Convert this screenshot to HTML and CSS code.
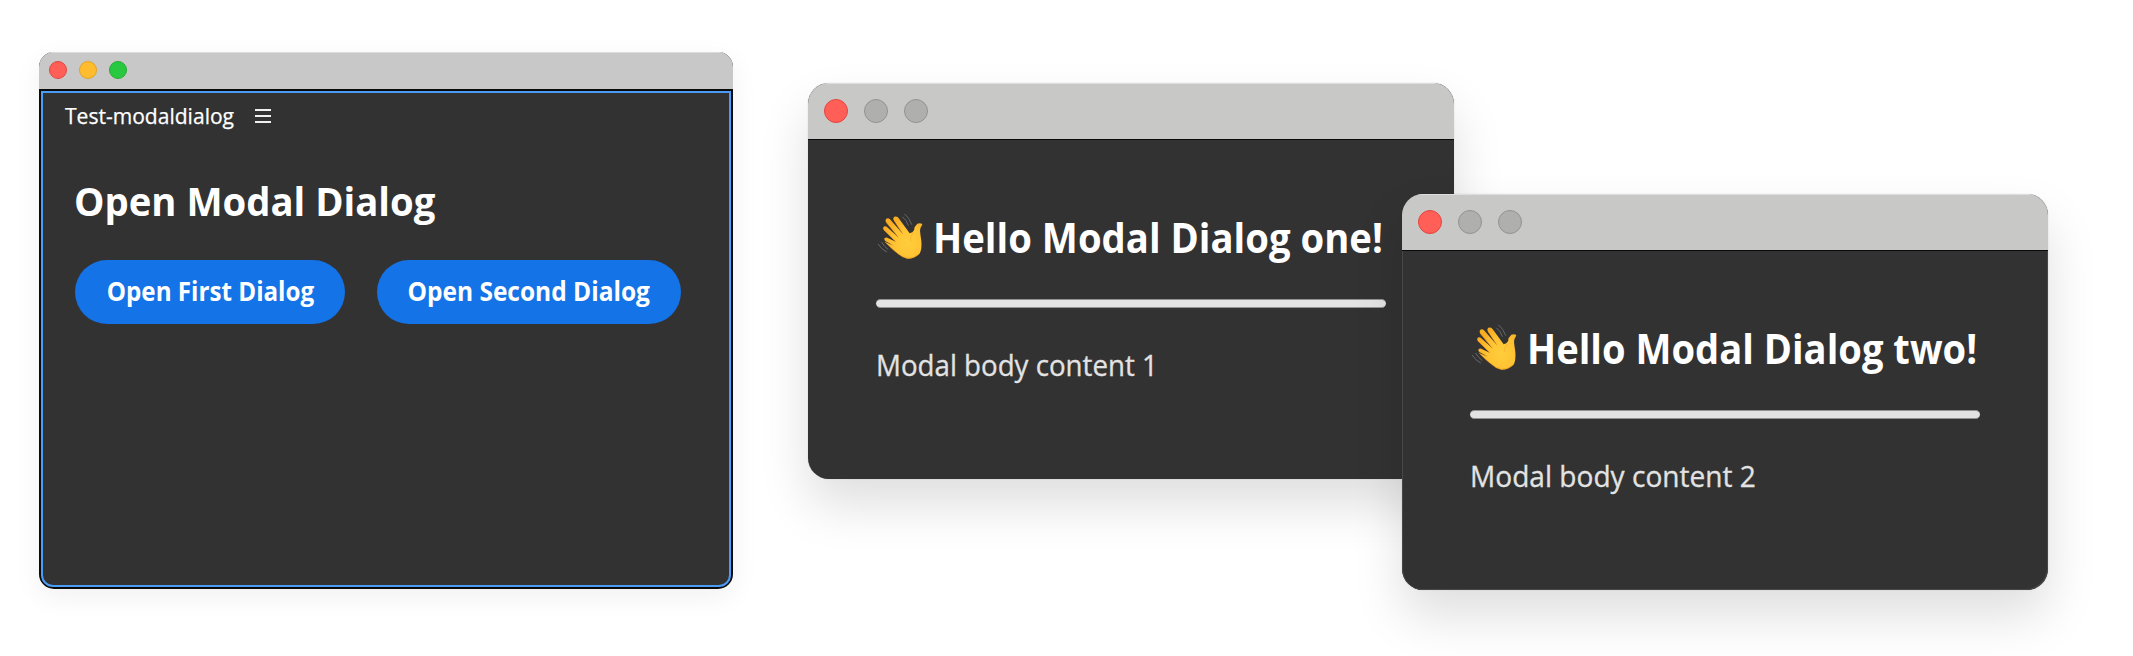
FILE: index.html
```html
<!DOCTYPE html>
<html lang="en">
<head>
<meta charset="utf-8">
<title>Modal dialogs</title>
<link rel="stylesheet" href="styles.css">
</head>
<body>
<svg class="defs" width="0" height="0" aria-hidden="true">
  <defs>
    <radialGradient id="skin" cx="0.62" cy="0.62" r="0.62">
      <stop offset="0" stop-color="#ffce3c"/>
      <stop offset="0.6" stop-color="#ffc233"/>
      <stop offset="1" stop-color="#f9ad22"/>
    </radialGradient>
    <symbol id="wave" viewBox="50 40 140 140">
      <g fill="none" stroke="#707070" stroke-width="2.6" stroke-linecap="round">
        <path d="M133 43q13 10 21 31M127 52q11 8 17 25M54 134q9 15 25 23M64 128q8 13 19 21"/>
      </g>
      <path fill="url(#skin)" d="M101 138 L75 124 Q70 119 73 115 Q76 112 81 114 L106 126 L70 91 Q67 85 70 81 Q75 78 80 82 L114 113 L77 68 Q74 61 78 57 Q84 54 89 59 L127 102 L100 62 Q97 55 102 51 Q109 49 114 54 L148 101 Q157 99 161 92 Q162 79 171 72 Q178 69 185 72 Q187 74 184 78 Q179 84 179 94 Q180 105 183 124 Q185 151 177 163 Q161 178 141 177 Q124 173 109 159 Q95 148 73 126 Z"/>
      <path fill="none" stroke="#d97f13" stroke-width="1.6" stroke-linecap="round" d="M102 64 L126 101M79 70 L113 112M74 94 L105 125"/>
      <path fill="none" stroke="#e08b17" stroke-width="2" stroke-linecap="round" d="M75 127 Q91 146 109 159 Q124 173 141 176 Q161 177 176 163" opacity=".75"/>
      <path fill="none" stroke="#f09d1c" stroke-width="2" stroke-linecap="round" d="M157 101 Q148 111 151 123" opacity=".6"/>
    </symbol>
  </defs>
</svg>

<main class="desktop">
  <section class="window panel">
    <header class="titlebar">
      <i class="light red"></i><i class="light yellow"></i><i class="light green"></i>
    </header>
    <div class="panel-body">
      <div class="tab">
        <span class="tab-name">Test-modaldialog</span>
        <svg class="menu" viewBox="0 0 16 15"><path d="M0 1h16M0 7h16M0 13h16"/></svg>
      </div>
      <div class="content">
        <h1>Open Modal Dialog</h1>
        <div class="actions">
          <button class="btn first"><span>Open First Dialog</span></button>
          <button class="btn second"><span>Open Second Dialog</span></button>
        </div>
      </div>
    </div>
  </section>

  <section class="window dialog one">
    <header class="titlebar">
      <i class="light red"></i><i class="light off"></i><i class="light off"></i>
    </header>
    <div class="dialog-body">
      <h2><svg class="hand"><use href="#wave"/></svg><span>Hello Modal Dialog one!</span></h2>
      <div class="rule"></div>
      <p>Modal body content 1</p>
    </div>
  </section>

  <section class="window dialog two">
    <header class="titlebar">
      <i class="light red"></i><i class="light off"></i><i class="light off"></i>
    </header>
    <div class="dialog-body">
      <h2><svg class="hand"><use href="#wave"/></svg><span>Hello Modal Dialog two!</span></h2>
      <div class="rule"></div>
      <p>Modal body content 2</p>
    </div>
  </section>
</main>
</body>
</html>
```

FILE: styles.css
```css
* { box-sizing: border-box; }
body {
  margin: 0;
  background: #fff;
  color: #fff;
  font-family: "Open Sans", "Noto Sans", sans-serif;
}
h1, h2, p { margin: 0; white-space: nowrap; }
.defs { position: absolute; }
.desktop { position: relative; width: 2133px; height: 656px; overflow: hidden; }

.window {
  position: absolute;
  display: flex;
  flex-direction: column;
  overflow: hidden;
  background: #323232;
}
.titlebar { display: flex; align-items: center; flex: none; }
.light { border-radius: 50%; border: 1px solid; flex: none; }
.red { background: #ff5f57; border-color: #e2463f; }
.yellow { background: #febc2e; border-color: #e1a325; }
.green { background: #28c840; border-color: #24ad34; }
.off { background: #afafad; border-color: #929290; }

.panel {
  left: 39px;
  top: 52px;
  width: 694px;
  height: 537px;
  border-radius: 15px;
  background: #0b0b0c;
  box-shadow: 0 8px 28px rgba(0, 0, 0, .06);
}
.panel .titlebar {
  height: 37px;
  padding: 0 0 2px 10px;
  gap: 12px;
  background: #c8c8c8;
  border-top: 1px solid #dcdcdc;
}
.panel .light { width: 18px; height: 18px; }
.panel-body {
  flex: 1;
  margin: 2px;
  border: 2px solid #4b9cf5;
  border-radius: 0 0 12px 12px;
  background: #323232;
  padding: 8px 0 0 22px;
}
.tab { display: flex; align-items: center; height: 30px; gap: 20px; }
.tab-name {
  width: 170px;
  white-space: nowrap;
  font-size: 22.4px;
  line-height: 30px;
  -webkit-text-stroke: .25px;
  transform: scaleX(.94);
  transform-origin: left;
}
.menu { width: 16px; height: 15px; margin-top: 1px; }
.menu path { stroke: #f0f0f0; stroke-width: 2; }
.content { padding: 46px 0 0 10px; }
h1 {
  margin-left: -1px;
  font-size: 40px;
  line-height: 48px;
  transform: scaleX(.957);
  transform-origin: left;
}
.actions { display: flex; gap: 32px; margin-top: 35px; }
.btn {
  display: flex;
  align-items: center;
  justify-content: center;
  height: 64px;
  padding: 0 0 3px;
  border: 0;
  border-radius: 32px;
  background: #1473e6;
  color: #fff;
  font: 700 26px "Open Sans", sans-serif;
  white-space: nowrap;
}
.btn.first { width: 270px; }
.btn.second { width: 304px; }
.btn.first span { transform: scaleX(.93); }
.btn.second span { transform: scaleX(.942); }

.dialog {
  width: 646px;
  height: 396px;
  border-radius: 21px;
  box-shadow: 0 0 1px rgba(0, 0, 0, .3), 0 26px 50px rgba(0, 0, 0, .13);
}
.one { left: 808px; top: 83px; }
.two { left: 1402px; top: 194px; }
.two .dialog-body {
  border-radius: 0 0 21px 21px;
  box-shadow: inset 1px 0 #484848, inset -1px -1px #484848;
}
.dialog .titlebar {
  height: 57px;
  padding: 0 0 1px 16px;
  gap: 16px;
  background: #c8c8c6;
  border-top: 1px solid #dededd;
  border-bottom: 1px solid #0a0a0a;
}
.dialog .light { width: 24px; height: 24px; }
.dialog-body { flex: 1; padding: 72px 68px 0; }
h2 {
  display: flex;
  align-items: flex-start;
  height: 50px;
  font-size: 41px;
  line-height: 50px;
}
h2 span { transform-origin: left; }
.hand { width: 46.7px; height: 46.7px; margin: 1px 9.8px 0 .7px; flex: none; }
.one h2 span { transform: scaleX(.933); }
.two h2 span { transform: scaleX(.93); }
.rule {
  height: 9px;
  margin-top: 37px;
  border-radius: 4.5px;
  background: #e3e3e3;
  border: solid #929292;
  border-width: 1px 0;
}
.dialog p {
  margin-top: 37px;
  color: #e3e3e3;
  font-size: 30px;
  line-height: 40px;
  -webkit-text-stroke: .3px;
  transform-origin: left;
}
.one p { transform: scaleX(.923); }
.two p { transform: scaleX(.936); }
```
